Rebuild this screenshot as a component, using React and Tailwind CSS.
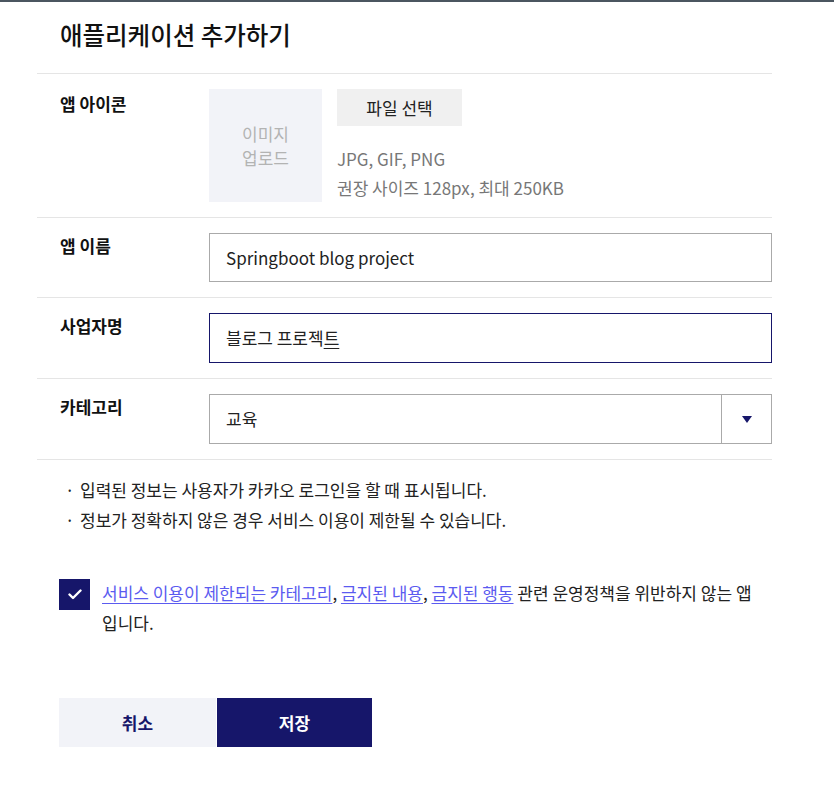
import React, { useState } from "react";

const font = { fontFamily: '"Noto Sans CJK KR", "Noto Sans", sans-serif' };

function Row({ label, children, className = "" }) {
  return (
    <div className={`flex border-b border-[#e5e5e5] ${className}`}>
      <div className="w-[172px] shrink-0 pl-[23px] text-[17px] font-bold text-[#111]">
        {label}
      </div>
      <div className="flex-1">{children}</div>
    </div>
  );
}

export default function App() {
  const [agree, setAgree] = useState(true);

  return (
    <div className="min-h-[808px] w-[834px] bg-white text-[#222]" style={font}>
      <div className="h-[2px] bg-[#4b5660]" />
      <div className="pl-[37px] pr-[62px]">
        <h1 className="pl-[23px] pt-[16px] pb-[21px] text-[24.5px] font-medium leading-[34px] text-[#111] border-b border-[#e5e5e5]">
          애플리케이션 추가하기
        </h1>

        <Row label={<div className="pt-[2px] leading-[26px]">앱 아이콘</div>} className="pt-[15px] pb-[15px]">
          <div className="flex gap-[15px]">
            <div className="flex h-[113px] w-[113px] items-center justify-center bg-[#f2f3f8] text-center text-[17px] leading-[24px] text-[#b3b3b3]">
              이미지
              <br />
              업로드
            </div>
            <div>
              <button className="h-[37px] w-[125px] bg-[#f0f0f0] text-[17px] text-[#222]">
                파일 선택
              </button>
              <div className="mt-[18px] text-[17px] leading-[29px] text-[#777]">
                <div>JPG, GIF, PNG</div>
                <div>권장 사이즈 128px, 최대 250KB</div>
              </div>
            </div>
          </div>
        </Row>

        <Row label={<div className="leading-[26px]">앱 이름</div>} className="pt-[15px] pb-[15px]">
          <div className="flex h-[49px] items-center border border-[#aaaaaa] pl-[16px] text-[17px] text-[#222]">
            Springboot blog project
          </div>
        </Row>

        <Row label={<div className="leading-[26px]">사업자명</div>} className="pt-[15px] pb-[15px]">
          <div className="flex h-[50px] items-center border border-[#16166a] pl-[16px] text-[17px] text-[#222]">
            블로그 프로젝<span className="underline underline-offset-[3px]">트</span>
          </div>
        </Row>

        <Row label={<div className="leading-[26px]">카테고리</div>} className="pt-[15px] pb-[15px]">
          <div className="flex h-[50px] items-stretch border border-[#aaaaaa] text-[17px] text-[#222]">
            <div className="flex flex-1 items-center pl-[16px]">교육</div>
            <div className="flex w-[50px] items-center justify-center border-l border-[#aaaaaa]">
              <svg width="10" height="7" viewBox="0 0 10 7">
                <path d="M0 0 L10 0 L5 7 Z" fill="#16166a" />
              </svg>
            </div>
          </div>
        </Row>

        <ul className="pl-[23px] pt-[15px] text-[17px] leading-[30px] text-[#222]">
          <li className="flex">
            <span className="w-[20px] pl-[5px]">·</span>입력된 정보는 사용자가 카카오 로그인을 할 때 표시됩니다.
          </li>
          <li className="flex">
            <span className="w-[20px] pl-[5px]">·</span>정보가 정확하지 않은 경우 서비스 이용이 제한될 수 있습니다.
          </li>
        </ul>

        <div className="mt-[43px] flex pl-[22px]">
          <button
            onClick={() => setAgree(!agree)}
            className={`mt-[1px] flex h-[31px] w-[31px] shrink-0 items-center justify-center ${agree ? "bg-[#16166a]" : "border border-[#aaa] bg-white"}`}
          >
            {agree && (
              <svg width="14" height="11" viewBox="0 0 14 11">
                <path d="M1.5 5.5 L5 9 L12.5 1.5" stroke="white" strokeWidth="2.4" fill="none" strokeLinecap="round" strokeLinejoin="round" />
              </svg>
            )}
          </button>
          <p className="ml-[12px] break-keep text-[17px] leading-[30px] text-[#222]">
            <a href="#" className="text-[#5b5bf0] underline underline-offset-[3px]">서비스 이용이 제한되는 카테고리</a>,{" "}
            <a href="#" className="text-[#5b5bf0] underline underline-offset-[3px]">금지된 내용</a>,{" "}
            <a href="#" className="text-[#5b5bf0] underline underline-offset-[3px]">금지된 행동</a> 관련 운영정책을 위반하지 않는 앱
            입니다.
          </p>
        </div>

        <div className="mt-[60px] flex pl-[22px]">
          <button className="h-[49px] w-[157px] bg-[#f2f3f8] text-[17px] font-bold text-[#16166a]">
            취소
          </button>
          <button className="ml-[1px] h-[49px] w-[155px] bg-[#16166a] text-[17px] font-bold text-white">
            저장
          </button>
        </div>
      </div>
    </div>
  );
}
